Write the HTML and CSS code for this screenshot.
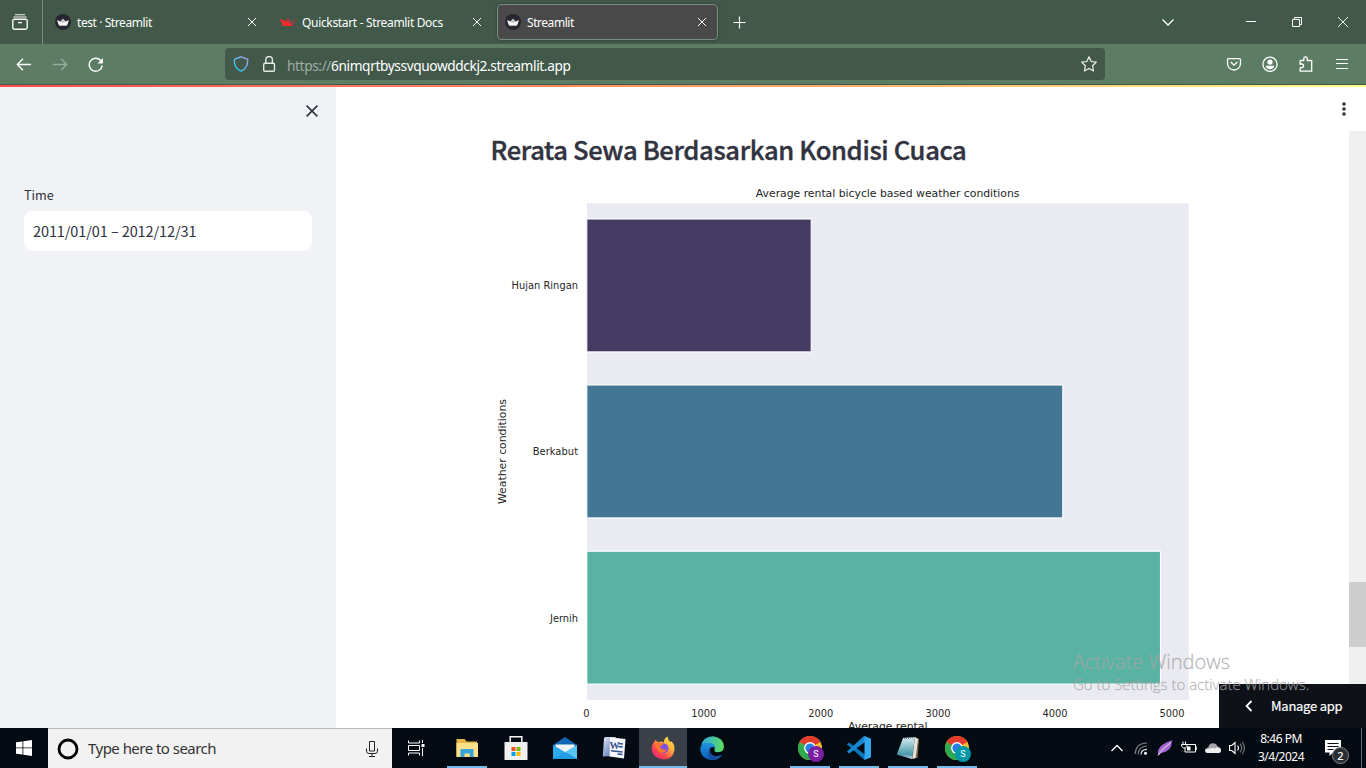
FILE: index.html
```html
<!DOCTYPE html>
<html lang="en">
<head>
<meta charset="utf-8">
<title>Streamlit</title>
<link rel="stylesheet" href="styles.css">
</head>
<body>
<svg class="defs" width="0" height="0">
  <defs>
    <symbol id="crown" viewBox="0 0 16 16"><circle cx="8" cy="8" r="8" fill="#262730"/><path d="M2.2 6.2 5.2 7.6 8 4.6l2.8 3 3-1.4-1.7 4.9q-.2.4-.7.4H4.6q-.5 0-.7-.4z" fill="#c5c5c8"/><path d="M2.2 6.2 8 9l5.800-2.800-1.700 4.900q-.2.4-.7.4H4.6q-.5 0-.7-.4z" fill="#fff"/></symbol>
    <symbol id="x" viewBox="0 0 10 10"><path d="M1 1l8 8M9 1L1 9" fill="none" stroke="currentColor" stroke-width="1"/></symbol>
    <symbol id="chrome" viewBox="0 0 24 24"><circle cx="12" cy="12" r="12" fill="#fbc02d"/><path d="M12 12 1.600 6A12 12 0 0 1 22.400 6z" fill="#e33b2e"/><path d="M1.600 6 7 15l5 2.500L12 24A12 12 0 0 1 1.600 6z" fill="#2da94f"/><path d="M1.600 6H12v6z" fill="#e33b2e"/><path d="M1.600 6 7 15l5-3z" fill="#2da94f"/><circle cx="12" cy="12" r="5.900" fill="#fff"/><circle cx="12" cy="12" r="4.600" fill="#2b7de9"/></symbol>
    <linearGradient id="gShield" x1="0" y1="1" x2="1" y2="0"><stop offset="0.2" stop-color="#35c8f3"/><stop offset="1" stop-color="#ab9cf0"/></linearGradient>
    <linearGradient id="gFire" x1="1" y1="0" x2="0.2" y2="1"><stop offset="0" stop-color="#fff24a"/><stop offset="0.4" stop-color="#ffb03c"/><stop offset="0.75" stop-color="#ff4250"/><stop offset="1" stop-color="#e22b83"/></linearGradient>
    <linearGradient id="gEdge" x1="0" y1="0.2" x2="1" y2="0.3"><stop offset="0" stop-color="#2aa9e0"/><stop offset="1" stop-color="#5fdb62"/></linearGradient>
    <linearGradient id="gBlue" x1="0" y1="0" x2="0" y2="1"><stop offset="0" stop-color="#2098e2"/><stop offset="1" stop-color="#0b58b4"/></linearGradient>
    <linearGradient id="gWord" x1="0" y1="0" x2="1" y2="1"><stop offset="0" stop-color="#e6effb"/><stop offset="1" stop-color="#3457a5"/></linearGradient>
    <linearGradient id="gNote" x1="0" y1="0" x2="0" y2="1"><stop offset="0" stop-color="#d8f0f4"/><stop offset="0.8" stop-color="#4997a8"/><stop offset="1" stop-color="#cfe3e6"/></linearGradient>
  </defs>
</svg>

<div class="screen">
  <header class="tabbar">
    <div class="recent"><svg width="16" height="16" viewBox="0 0 16 16" fill="none" stroke="#f3f6f4" stroke-width="1.4"><path d="M3 .7h10M1.5 3.2Q1.8 3 2.5 3h11q.7 0 1 .2" stroke-width="1.1"/><rect x=".8" y="5.2" width="14.4" height="10" rx="1.6"/><path d="M6 8.6h4"/></svg></div>
    <div class="tabs">
      <div class="tab"><svg class="fav"><use href="#crown"/></svg><span class="label t1">test · Streamlit</span><svg class="close"><use href="#x"/></svg></div>
      <div class="tab"><svg class="fav" viewBox="0 0 16 16"><path d="M4.700 7.200 8.200 3.800l3 4.500L13.200 11.500 11.900 12z" fill="#a63c43"/><path d="M11.200 8.300 16 4.800 13.200 11.500q-.3.500-1.300.5z" fill="#8c4043"/><path d="M0 4.800 8 8.200 13 12H3.700q-.7 0-.9-.6z" fill="#ff2b2b"/></svg><span class="label t2">Quickstart - Streamlit Docs</span><svg class="close"><use href="#x"/></svg></div>
      <div class="tab active"><svg class="fav"><use href="#crown"/></svg><span class="label t3">Streamlit</span><svg class="close"><use href="#x"/></svg></div>
    </div>
    <svg class="plus" width="13" height="13" viewBox="0 0 13 13" stroke="#fff" stroke-width="1.2"><path d="M6.500.500v12M.5 6.500h12"/></svg>
    <div class="window">
      <svg width="12" height="7" viewBox="0 0 12 7" fill="none" stroke="#fff" stroke-width="1.3"><path d="M.5.5 6 6l5.500-5.500"/></svg>
      <svg class="min" width="10" height="10" viewBox="0 0 10 10"><path d="M0 4h10v1H0z" fill="#fff"/></svg>
      <svg width="10" height="10" viewBox="0 0 10 10" fill="none" stroke="#fff"><path d="M.5 2.500h7v7h-7zM2.500 2.500v-2h7v7h-2"/></svg>
      <svg width="10" height="10" viewBox="0 0 10 10" stroke="#fff" stroke-width=".9"><path d="M0 0l10 10M10 0 0 10"/></svg>
    </div>
  </header>

  <nav class="toolbar">
    <div class="navbtns">
      <svg width="16" height="16" viewBox="0 0 16 16" fill="none" stroke="#fff" stroke-width="1.3"><path d="M15 7.500H1.700M7 1.800 1.300 7.500 7 13.200"/></svg>
      <svg width="16" height="16" viewBox="0 0 16 16" fill="none" stroke="#98ac9e" stroke-width="1.3"><path d="M1 7.500h13.300M9 1.800 14.700 7.500 9 13.200"/></svg>
      <svg width="16" height="16" viewBox="0 0 16 16" fill="none" stroke="#fff" stroke-width="1.4"><path d="M14.200 8.500A6.500 6.500 0 1 1 12.500 3.300L14 5"/><path d="M14.900 1v5.400H9.500z" fill="#fff" stroke="none"/></svg>
    </div>
    <div class="urlbar">
      <svg width="16" height="16" viewBox="0 0 16 16" fill="none" stroke="url(#gShield)" stroke-width="1.4"><path d="M8 .8 14.300 3.200q.5.200.4.800Q14.800 12.500 8 15.200 1.200 12.500 1.300 4q0-.6.500-.8z"/></svg>
      <svg class="lock" width="16" height="16" viewBox="0 0 16 16" fill="none" stroke="#e3e9e5" stroke-width="1.4"><rect x="2.700" y="7.300" width="10.800" height="8" rx="1.200"/><path d="M4.800 7V3.800a3.300 3.300 0 0 1 6.600 0V7"/></svg>
      <span class="url"><span class="dim">https://</span>6nimqrtbyssvquowddckj2.streamlit.app</span>
      <svg width="16" height="16" viewBox="0 0 16 16" fill="none" stroke="#eef2ef" stroke-width="1.200" stroke-linejoin="round"><path d="M8 .8 10.200 5.500 15.300 6.100 11.600 9.700 12.500 15 8 12.400 3.500 15 4.400 9.700.7 6.100 5.800 5.500z"/></svg>
    </div>
    <div class="actions">
      <svg width="16" height="16" viewBox="0 0 16 16" fill="none" stroke="#fff" stroke-width="1.3"><path d="M2.500 2.600h11q1 0 1 1V7.500A6.500 6.500 0 0 1 1.500 7.500V3.600q0-1 1-1zM4.700 6 8 9.200 11.300 6"/></svg>
      <svg width="16" height="16" viewBox="0 0 16 16"><circle cx="8" cy="8.300" r="7.100" fill="none" stroke="#fff" stroke-width="1.300"/><circle cx="8" cy="6.100" r="2.600" fill="#fff"/><path d="M3.800 9.800h8.400q0 3.400-4.200 3.400T3.800 9.800z" fill="#fff"/></svg>
      <svg width="16" height="16" viewBox="0 0 16 16" fill="none" stroke="#fff" stroke-width="1.300" stroke-linejoin="round"><path d="M2.200 7.500V4.500h3.600V2.700a1.700 1.700 0 0 1 3.500 0v1.800h4.400v10.700H2.200v-3.500h1.500a1.800 1.800 0 0 0 0-3.700H1.800z"/></svg>
      <svg width="16" height="16" viewBox="0 0 16 16" stroke="#fff" stroke-width="1.200"><path d="M2 3.500h12M2 7.500h12M2 12.500h12"/></svg>
    </div>
  </nav>
  <div class="rainbow"></div>

  <main class="app">
    <aside class="sidebar">
      <div class="sidehead"><svg width="12" height="12" viewBox="0 0 12 12" stroke="#31333f" stroke-width="1.600"><path d="M.6.600l10.800 10.800M11.400.600.6 11.400"/></svg></div>
      <label class="fieldname">Time</label>
      <div class="field">2011/01/01 – 2012/12/31</div>
    </aside>
    <section class="content">
      <h2>Rerata Sewa Berdasarkan Kondisi Cuaca</h2>
      <svg class="chart" width="720" height="554" viewBox="480 174 720 554">
        <rect x="587" y="203.300" width="601.700" height="496.500" fill="#eaeaf2"/>
        <g stroke="#fff" stroke-width="1.100">
          <rect x="586.800" y="219" width="224.400" height="132.900" fill="#443a63"/>
          <rect x="586.800" y="385" width="476" height="132.900" fill="#437695"/>
          <rect x="586.800" y="551.200" width="573.700" height="132.900" fill="#59b3a2"/>
        </g>
        <g class="axis">
          <text x="755.800" y="197" textLength="263.700" class="big">Average rental bicycle based weather conditions</text>
          <text x="511.500" y="289" textLength="66.500">Hujan Ringan</text>
          <text x="532.700" y="455" textLength="45.300">Berkabut</text>
          <text x="550" y="621.600" textLength="28">Jernih</text>
          <text transform="translate(505.500 504) rotate(-90)" textLength="105" class="big">Weather conditions</text>
          <g class="ticks">
            <text x="586.500" y="716.500">0</text><text x="703.700" y="716.500">1000</text><text x="820.700" y="716.500">2000</text><text x="938" y="716.500">3000</text><text x="1055" y="716.500">4000</text><text x="1172" y="716.500">5000</text>
          </g>
          <text x="848" y="730" textLength="79.500" class="big">Average rental</text>
        </g>
      </svg>
      <svg class="kebab" width="4" height="16" viewBox="0 0 4 16" fill="#31333f"><circle cx="2" cy="3" r="1.800"/><circle cx="2" cy="8" r="1.800"/><circle cx="2" cy="13" r="1.800"/></svg>
      <div class="scroll"><div class="thumb"></div></div>
      <div class="manage"><svg width="8" height="12" viewBox="0 0 8 12" fill="none" stroke="#fff" stroke-width="1.800"><path d="M6.500 1 1.600 6l4.900 5"/></svg><span>Manage app</span></div>
      <div class="watermark"><div class="wm1">Activate Windows</div><div class="wm2">Go to Settings to activate Windows.</div></div>
    </section>
  </main>

  <footer class="taskbar">
    <div class="start"><svg width="16" height="16" viewBox="0 0 16 16" fill="#fff"><path d="M0 2.300 6.500 1.400v6.100H0zM7.300 1.300 16 0v7.500H7.300zM0 8.300h6.500v6.300L0 13.700zM7.300 8.300H16V16l-8.700-1.300z"/></svg></div>
    <div class="search">
      <svg width="22" height="22" viewBox="0 0 22 22"><circle cx="11" cy="11" r="9" fill="none" stroke="#000" stroke-width="2.800"/></svg>
      <span>Type here to search</span>
      <svg class="mic" width="12" height="16" viewBox="0 0 12 16" fill="none" stroke="#222"><path d="M3.500.5h5v9.500h-5zM.5 7.500V10q0 2.500 2.500 2.500h6q2.500 0 2.500-2.500V7.500M6 12.500v3M3 15.500h6"/></svg>
    </div>
    <div class="task view"><svg width="17" height="16" viewBox="0 0 17 16" fill="none" stroke="#fff"><path d="M.5.500v2.500h11V.5M.5 5.500h11v5H.5zM.5 15.500V13h11v2.500M14.500 0v3M14.500 8v8"/><path d="M13.500 4h3v3h-3z" fill="#fff" stroke="none"/></svg></div>
    <div class="apps">
      <div class="task run"><svg width="24" height="24" viewBox="0 0 24 24"><path d="M1.500 3h8l2 2.500H22v15H1.500z" fill="#eab549"/><path d="M1.500 7H23v14H1.500z" fill="#ffe08a"/><path d="M5.500 21v-8h13v8h-3.700v-3.500H9.500V21z" fill="#35a4dc"/></svg></div>
      <div class="task"><svg width="24" height="26" viewBox="0 0 24 26"><path d="M6.200 8V1.700h11.600V8" fill="none" stroke="#f5f5f5" stroke-width="1.500"/><path d="M.5 7h23v18H.5z" fill="#f0f0f0"/><path d="M7.500 12h4v4h-4z" fill="#f25022"/><path d="M12.500 12h4v4h-4z" fill="#7fba00"/><path d="M7.500 17h4v4h-4z" fill="#00a4ef"/><path d="M12.500 17h4v4h-4z" fill="#ffb900"/></svg></div>
      <div class="task"><svg width="24" height="24" viewBox="0 0 24 24"><path d="M0 9 12 1l12 8v14H0z" fill="#1168b5"/><path d="M2.500 8.500h19V12L12 17.500 2.500 12z" fill="#f2f3f4"/><path d="M0 9l12 7v7H0z" fill="#2ca9ea"/><path d="M24 9v14L12 16z" fill="#59c5f5"/><path d="M0 23h24L12 16z" fill="#249be4"/></svg></div>
      <div class="task"><svg width="24" height="24" viewBox="0 0 24 24"><path d="M3.500 1H14L13 20 .8 20.500 2 2.500Q2.200 1 3.500 1z" fill="url(#gWord)"/><path d="M8 1.200 23.500 3 22 22.500 7.500 20.500z" fill="#f7f9fc"/><path d="M16.500 7.500l4.500.5M16.300 10.500l4.500.5M9 14.800l11.600 1.300M15.500 18l5 .6" stroke="#324f91" stroke-width="1.500"/><text x="7.500" y="12.500" class="wordmark">W</text></svg></div>
      <div class="task run current"><svg width="24" height="24" viewBox="0 0 24 24"><path d="M3 6.300 4.500 4l2.200 2L9 5.800Q11.500 5 13 7 12.200 2.800 16.500.4 17 4.200 19.500 6l1-.8Q24 9 23.500 13.500 22.500 23.500 12 23.500 1.600 22.500.6 13 .4 9.200 3 6.300z" fill="url(#gFire)"/><circle cx="12.500" cy="12.300" r="4.900" fill="#7953df"/><path d="M4.500 7.200Q10 5.200 12.200 8.600L9.700 10q-.8 2.500 2.300 3.500 2 .5 3.500-.6-1.200 4.300-5.400 3.800Q5 15.700 4.500 7.200z" fill="#ff732e"/></svg></div>
      <div class="task"><svg width="24" height="24" viewBox="0 0 24 24"><path d="M1 10Q3 .4 13 .3 23.800 2 24 11q-.5 5.300-6.200 5.200-4.300-.2-3.100-2.500Q15.800 8 9 7 3 6.800 1 10z" fill="url(#gEdge)"/><path d="M.2 12Q2 6.500 8.500 6.700q7 .6 6.500 5.800-2-2.500-4.600-.7-3.200 4.500 2.100 7.900 4.500 1.700 9-.6Q18.800 24 12.500 24 .3 23.500.2 12z" fill="url(#gBlue)"/><path d="M10.200 12Q8.800 18.500 15 20q3.500.5 7-1.300Q19 24 13 24 5 20 10.200 12z" fill="#174f9c"/></svg></div>
      <div class="task"></div>
      <div class="task run chrome"><svg width="24" height="24"><use href="#chrome"/></svg><b class="badge purple">S</b></div>
      <div class="task run"><svg width="24" height="24" viewBox="0 0 24 24"><path d="M0 8.500 2.200 6.500 18 18.500V24L16.500 23z" fill="#0877b9"/><path d="M0 15.500 17 0l1.500 1v4.800L2.200 17.500z" fill="#1688d1"/><path d="M17.500 0 24 2.800v18.400L17.500 24z" fill="#35a8f0"/></svg></div>
      <div class="task run"><svg width="24" height="24" viewBox="0 0 24 24"><path d="M19 1.500 23 3l-1.500 19-6 .8z" fill="#877457"/><path d="M19 1 22 3l-2.500 19-3 1z" fill="#e5e5de"/><path d="M7 2l12-1-3 22L.8 18.500z" fill="url(#gNote)"/><path d="M8 2.500 19 1.500" stroke="#687c80" stroke-width="1.500" stroke-dasharray="1 1"/></svg></div>
      <div class="task run chrome"><svg width="24" height="24"><use href="#chrome"/></svg><b class="badge teal">S</b></div>
    </div>
    <div class="tray">
      <svg viewBox="0 0 16 16" fill="none" stroke="#fff" stroke-width="1.300"><path d="M2.500 11 8 5.500l5.500 5.500"/></svg>
      <svg viewBox="0 0 16 16" fill="none" stroke="#777d83" stroke-width="1.200"><path d="M2 14Q3 3 14 3M5 14.500Q5.500 6.500 14 6"/><path d="M8 14.500q0-5 6-5.200" stroke="#ddd"/><circle cx="12.500" cy="13.200" r="1.500" fill="#fff" stroke="none"/></svg>
      <svg viewBox="0 0 16 16"><path d="M1 15.500Q0 9 5 5 9 2 15.500.300 14 3 14.500 5 13 10 8 12 4 12.300 1 15.500z" fill="#a466cf"/><path d="M1 15.500Q5 8.500 14 2.500" stroke="#eedbf7" fill="none"/></svg>
      <svg viewBox="0 0 16 16" fill="none" stroke="#fff"><path d="M5.500 4.500h9v7.500H4V8M15.300 6.500v3.500M.5 4.500H6v2L4.500 8h-2L.8 6.500zM2 4.500v-3M4.500 4.500v-3"/><path d="M6 6.500h3.500v4H6z" fill="#fff" stroke="none"/></svg>
      <svg viewBox="0 0 16 16"><path d="M2 11Q0 8 3.500 7 5 2.500 9 3.500q2.500 0 3.500 3Q16 7 16 10q0 3-3 3H3Q0 13 0 10.500 0 8 3 8z" fill="#a6a8ac"/><path d="M3 13Q0 12.500.2 10 1 8.500 4 9q1.500-1.500 4-1l2 .5Q12 7 14 8 16 8.700 16 10.500q0 2.500-3 2.500z" fill="#eeeeef"/></svg>
      <svg viewBox="0 0 16 16" fill="none" stroke="#fff" stroke-width="1.100"><path d="M.6 5.500h2.200L6 2.500v11l-3.200-3H.6zM8.500 5.500q2 2.500 0 5"/><path d="M11 3.700q3.500 4.300 0 8.600M13.200 2q4.500 6 0 12" stroke="#777d83"/></svg>
    </div>
    <div class="clock"><span>8:46 PM</span><span class="date">3/4/2024</span></div>
    <div class="notice"><svg width="16" height="16" viewBox="0 0 16 16"><path d="M0 0h16v12.500H8L4.500 16v-3.500H0z" fill="#fff"/><path d="M2.500 3.500h11M2.500 6.500h11M2.500 9.500h6" stroke="#0b0f16"/></svg><b>2</b></div>
    <div class="edge"></div>
  </footer>
</div>
</body>
</html>
```
FILE: styles.css
```css
* { box-sizing: border-box; }
body { margin: 0; overflow: hidden; font-family: "Noto Sans", sans-serif; }
svg { display: block; flex: none; }
.defs { position: absolute; }
.screen { width: 1366px; height: 768px; display: flex; flex-direction: column; overflow: hidden; }

.tabbar { height: 44px; flex: none; background: #42594a; display: flex; align-items: center; color: #fff; }
.recent { width: 43px; height: 44px; border-right: 1px solid #768e7e; display: flex; align-items: center; padding-left: 12px; }
.tabs { display: flex; gap: 4px; margin-left: 4px; }
.tab { width: 221px; height: 36px; border-radius: 4px; display: flex; align-items: center; padding: 0 11px 0 8px; }
.active { background: #484948; border: 1px solid #768e7e; padding: 0 10px 0 7px; box-shadow: 0 0 3px rgba(0,0,0,.4); }
.fav { width: 16px; height: 16px; margin-right: 6px; }
.label { flex: 1; font-size: 12px; white-space: nowrap; line-height: 20px; padding-top: 2px; }
.t1 { letter-spacing: -.42px; }
.t2 { letter-spacing: -.33px; }
.t3 { letter-spacing: -.45px; }
.close { width: 10px; height: 10px; }
.plus { margin-left: 15px; }
.window { margin-left: auto; display: flex; align-items: center; padding-right: 18px; gap: 36px; }
.window .min { margin-left: 36px; }

.toolbar { height: 41px; flex: none; background: #5c7c64; border-bottom: 1px solid #42594a; display: flex; align-items: center; }
.navbtns { display: flex; gap: 20px; padding: 2px 121px 0 16px; }
.urlbar { width: 880px; height: 32px; background: #42594a; border-radius: 4px; display: flex; align-items: center; padding: 0 8px; color: #fff; }
.lock { margin-left: 12px; }
.url { flex: 1; margin-left: 10px; font-size: 13.700px; letter-spacing: -.39px; line-height: 20px; padding-top: 3px; }
.dim { color: #a0aca4; }
.actions { display: flex; gap: 20px; margin-left: 121px; }
.rainbow { height: 2px; flex: none; background: linear-gradient(90deg, #ff4b4b, #ffa868 60%, #fffd80); }

.app { height: 641px; flex: none; display: flex; }
.sidebar { width: 336px; background: #f0f2f6; padding: 0 24px; font-family: "Noto Sans CJK SC", sans-serif; color: #31333f; }
.sidehead { height: 98px; display: flex; justify-content: flex-end; padding: 18px 18px 0 0; margin-right: -24px; }
.fieldname { display: block; font-size: 12.700px; line-height: 20px; height: 26px; }
.field { height: 40px; border-radius: 8px; background: #fff; padding-left: 9px; line-height: 40px; font-size: 14.500px; letter-spacing: -.1px; }
.content { width: 1030px; background: #fff; position: relative; overflow: hidden; }
h2 { margin: 0 0 0 154.500px; padding-top: 40px; height: 87px; font: 500 25.600px/43px "Noto Sans CJK SC", sans-serif; letter-spacing: -.36px; -webkit-text-stroke: .4px #31333f; color: #31333f; white-space: nowrap; }
.chart { margin-left: 144px; }
.axis { font-family: "DejaVu Sans", sans-serif; font-size: 9.900px; fill: #262626; }
.big { font-size: 10.900px; }
.ticks { text-anchor: middle; }
.kebab { position: absolute; right: 20px; top: 14px; }
.scroll { position: absolute; right: 0; top: 44px; width: 17px; height: 597px; background: #f0f0f0; padding-top: 451px; }
.thumb { height: 65px; background: #cdcdcd; }
.manage { position: absolute; right: 0; bottom: 0; width: 147px; height: 44px; background: #0e1117; color: #fff; display: flex; align-items: center; padding: 0 0 0 26px; gap: 18px; font: 400 13px/20px "Noto Sans CJK SC", sans-serif; letter-spacing: -.25px; -webkit-text-stroke: .2px #fff; }
.watermark { position: absolute; left: 737px; top: 561px; color: rgba(165,165,165,.8); white-space: nowrap; font-family: "Open Sans", sans-serif; font-weight: 300; -webkit-text-stroke: .3px rgba(165,165,165,.6); }
.wm1 { font-size: 20px; line-height: 27px; }
.wm2 { font-size: 15px; line-height: 19px; letter-spacing: -.01px; }

.taskbar { height: 40px; flex: none; background: #050b12; display: flex; color: #fff; }
.start { width: 48px; display: flex; align-items: center; justify-content: center; }
.search { width: 344px; background: #f2f2f2; border-top: 1px solid #bbb; color: #333; display: flex; align-items: center; padding: 0 14px 0 9px; font-size: 15px; }
.search span { flex: 1; margin-left: 9px; margin-top: -2px; letter-spacing: -.53px; white-space: nowrap; }
.task { width: 48px; height: 40px; display: flex; align-items: center; justify-content: center; position: relative; }
.view { margin-right: 3px; }
.apps { display: flex; gap: 1px; }
.run::after { content: ""; position: absolute; left: 4px; right: 4px; bottom: 0; height: 2px; background: #76b9ed; }
.current { background: #3b4048; }
.current::after { left: 0; right: 0; }
.wordmark { font: bold 10px "Liberation Serif", serif; fill: #324f91; }
.badge { position: absolute; left: 22px; top: 18px; width: 16px; height: 16px; border-radius: 8px; font: 9px/16px Roboto, sans-serif; text-align: center; }
.purple { background: #7b1fa2; }
.teal { background: #0097a7; }
.tray { display: flex; align-items: center; gap: 8px; margin-left: 128px; }
.tray svg { width: 16px; height: 16px; }
.clock { width: 62px; margin-left: 5px; display: flex; flex-direction: column; align-items: center; padding-top: 2px; font-size: 12px; line-height: 18px; letter-spacing: -.5px; white-space: nowrap; }
.notice { position: relative; margin-left: 13px; padding-top: 12px; width: 36px; }
.notice b { position: absolute; left: 7px; top: 19px; width: 17px; height: 17px; border: 1px solid #888; border-radius: 9px; background: #2b2f35; font-size: 11px; line-height: 15px; text-align: center; font-weight: 500; }
.edge { width: 1px; background: #666b70; }
```
